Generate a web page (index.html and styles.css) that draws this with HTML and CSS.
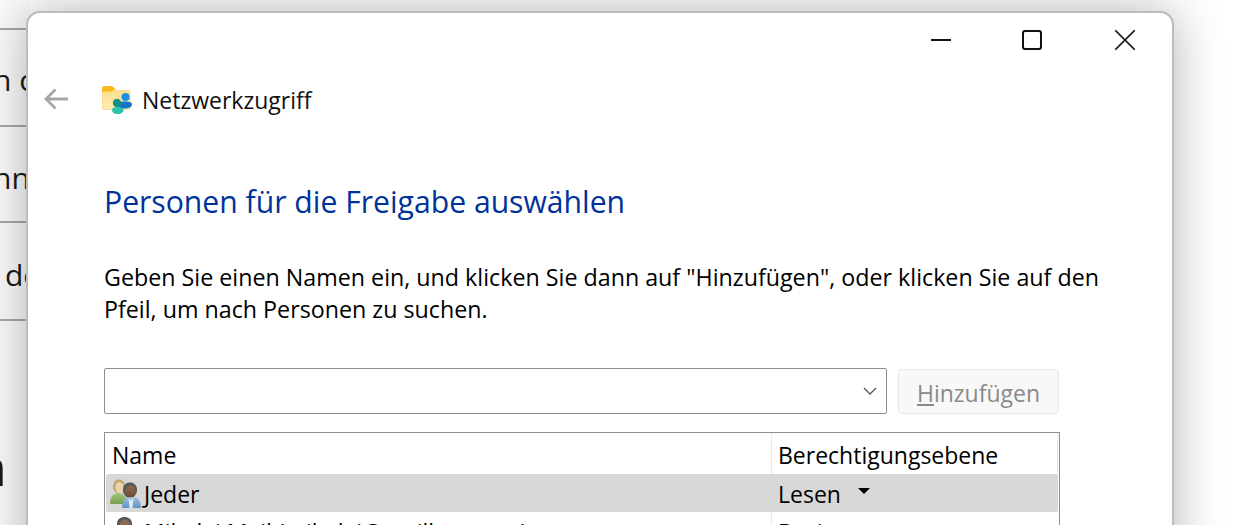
FILE: index.html
```html
<!DOCTYPE html>
<html lang="de">
<head>
<meta charset="utf-8">
<title>Netzwerkzugriff</title>
<link rel="stylesheet" href="styles.css">
</head>
<body>
<div class="desktop">
  <div class="behind">
    <div class="behind-row r1"></div>
    <div class="behind-row r2"><span>n c</span></div>
    <div class="behind-row r3"><span>nnu</span></div>
    <div class="behind-row r4"><span>de</span></div>
    <div class="behind-row r5"><span>n</span></div>
  </div>
  <section class="window">
    <div class="controls">
      <svg class="ctl" width="20" height="20" viewBox="0 0 20 20"><path d="M0 10H20" stroke="#111" stroke-width="2" fill="none"/></svg>
      <svg class="ctl" width="20" height="20" viewBox="0 0 20 20"><rect x="1" y="1" width="18" height="18" rx="2" stroke="#111" stroke-width="2" fill="none"/></svg>
      <svg class="ctl ctl-close" width="20" height="20" viewBox="0 0 20 20"><path d="M0 0L20 20M20 0L0 20" stroke="#222" stroke-width="1.7" fill="none"/></svg>
    </div>
    <div class="nav">
      <svg class="back" width="24" height="22" viewBox="0 0 24 22"><path d="M24 11H2M11.500 1.500L2 11L11.500 20.500" stroke="#a6a6a6" stroke-width="2.800" fill="none"/></svg>
      <svg class="folder" width="30" height="28" viewBox="0 0 30 28">
        <defs>
          <linearGradient id="fb" x1="0" y1="0" x2="0" y2="1"><stop offset="0" stop-color="#fbdc85"/><stop offset="1" stop-color="#fdeeb5"/></linearGradient>
        </defs>
        <path d="M0 4a2 2 0 0 1 2-2h9l3 2.500h12.500a1.500 1.500 0 0 1 1.500 1.500v16a1.500 1.500 0 0 1-1.500 1.500H1.500a1.500 1.500 0 0 1-1.500-1.500z" fill="url(#fb)" stroke="#e9c466" stroke-width=".5"/>
        <path d="M0 6V2.500A2.500 2.500 0 0 1 2.500 0H10l3.500 3L10 5.500H2z" fill="#fbb91d"/>
        <circle cx="23.500" cy="11" r="4" fill="#1c8fe3"/>
        <path d="M14.500 19c0-2.500 3.500-3.500 8.500-3.500s7 1 7 3c0 2.500-3 4-7.500 4-4 0-8-1-8-3.500z" fill="#1574c9"/>
        <circle cx="15" cy="17" r="4.200" fill="#129083"/>
        <path d="M10 24c0-2 2-3 5.500-3s6 1 6 3c0 2.500-2.500 4-6 4s-5.500-1.500-5.500-4z" fill="#2cc2ab"/>
      </svg>
      <span class="nav-title">Netzwerkzugriff</span>
    </div>
    <div class="content">
      <h1 class="heading">Personen für die Freigabe auswählen</h1>
      <p class="intro">Geben Sie einen Namen ein, und klicken Sie dann auf "Hinzufügen", oder klicken Sie auf den Pfeil, um nach Personen zu suchen.</p>
      <div class="picker">
        <div class="combo">
          <svg width="14" height="8" viewBox="0 0 14 8"><path d="M1 1L7 7L13 1" stroke="#555" stroke-width="1.300" fill="none"/></svg>
        </div>
        <div class="add-btn"><u>H</u>inzufügen</div>
      </div>
      <div class="table">
        <div class="row head">
          <div class="col-name">Name</div>
          <div class="col-level">Berechtigungsebene</div>
        </div>
        <div class="row selected">
          <div class="col-name">
            <svg class="user-icon" width="34" height="30" viewBox="0 0 34 30">
              <defs>
                <linearGradient id="sk" x1="0" y1="0" x2="0" y2="1"><stop offset="0" stop-color="#8f6a4c"/><stop offset="1" stop-color="#6a4630"/></linearGradient>
                <linearGradient id="sh" x1="0" y1="0" x2="0" y2="1"><stop offset="0" stop-color="#9cc0e2"/><stop offset="1" stop-color="#5b8fc0"/></linearGradient>
                <linearGradient id="gr" x1="0" y1="0" x2="0" y2="1"><stop offset="0" stop-color="#a8c47e"/><stop offset="1" stop-color="#76a050"/></linearGradient>
              </defs>
              <path d="M4 9c0-5 2.500-7.500 6-7.500S16 4 16 9c0 3-2 6-6 6s-6-3-6-6z" fill="#bda96c"/>
              <ellipse cx="10.500" cy="9.500" rx="4" ry="5.500" fill="#ecd3ae"/>
              <path d="M1 26c0-7 3-11 8-11s9 3 9 11z" fill="url(#gr)"/>
              <path d="M14 12c0-5 3-7.500 7-7.500s7 2.500 7 7.500c0 4-3 8-7 8s-7-4-7-8z" fill="#55585c"/>
              <ellipse cx="21.500" cy="14" rx="5" ry="6.500" fill="url(#sk)"/>
              <path d="M13 30c0-7 2-10.500 9-11s10 4 10 11c-3 1.500-16 1.500-19 0z" fill="url(#sh)"/>
              <path d="M19.500 19.500l2.500 3 2.500-3.500-1 11h-3z" fill="#e2ebf3"/>
            </svg>
            <span>Jeder</span>
          </div>
          <div class="col-level"><span>Lesen</span><i class="caret"></i></div>
        </div>
        <div class="row">
          <div class="col-name">
            <svg class="user-icon person" width="34" height="30" viewBox="0 0 34 30">
              <path d="M8 7c0-5 3.500-7 7.500-7s7.500 2 7.500 7c0 4-3.500 8-7.500 8S8 11 8 7z" fill="#55585c"/>
              <ellipse cx="16" cy="9" rx="5.500" ry="6.500" fill="#8f6a4c"/>
              <path d="M6 30c0-9 3-14 10-14s11 5 11 14z" fill="#6fa0cf"/>
            </svg>
            <span>Mikolaj Mail (mikolaj@mailbox.com)</span>
          </div>
          <div class="col-level"><span>Besitzer</span></div>
        </div>
      </div>
    </div>
  </section>
</div>
</body>
</html>
```
FILE: styles.css
```css
* { box-sizing: border-box; }
html, body { margin: 0; height: 100%; overflow: hidden; }
body { font-family: "Open Sans", "Noto Sans", sans-serif; color: #000; background: #fff; }
.desktop {
  position: relative;
  width: 1234px;
  height: 525px;
  overflow: hidden;
  background: #fff;
}
.behind {
  position: absolute;
  left: 0;
  top: 0;
  width: 30px;
  height: 525px;
  background: #fbfbfb;
  display: flex;
  flex-direction: column;
}
.behind-row {
  border-bottom: 2px solid #a8a8a8;
  font-size: 30px;
  white-space: nowrap;
  overflow: hidden;
  display: flex;
  align-items: center;
  color: #1a1a1a;
}
.behind-row span { margin-left: -7px; }
.r1 { height: 30px; }
.r2 { height: 97px; padding-top: 4px; }
.r3 { height: 96px; padding-top: 6px; }
.r4 { height: 98px; padding-top: 6px; }
.r4 span { margin-left: 5px; }
.r5 { height: 204px; border-bottom: 0; padding-top: 84px; font-size: 52px; }
.r5 span { margin-left: -25px; }
.window {
  position: absolute;
  left: 26px;
  top: 11px;
  width: 1148px;
  height: 560px;
  background: #fff;
  border: 2px solid #bcbcbc;
  border-radius: 14px;
  box-shadow: 0 0 50px rgba(0,0,0,.3);
}
.controls {
  display: flex;
  justify-content: flex-end;
  gap: 71px;
  padding: 17px 37px 0 0;
  height: 64px;
}
.ctl { display: block; }
.ctl-close { margin-left: 2px; }
.nav {
  display: flex;
  align-items: center;
  height: 44px;
  padding: 2px 0 0 16px;
}
.back { margin: -2px 34px 0 0; }
.folder { margin-right: 10px; }
.nav-title { font-size: 23px; color: #111; }
.content { padding: 0 0 0 76px; }
.heading {
  margin: 59px 0 0;
  font-size: 30.150px;
  font-weight: 400;
  line-height: 44px;
  color: #003399;
}
.intro {
  margin: 37px 0 0;
  width: 1020px;
  font-size: 23.250px;
  line-height: 32px;
}
.picker {
  display: flex;
  align-items: center;
  margin-top: 43px;
  gap: 11px;
}
.combo {
  width: 783px;
  height: 46px;
  border: 1.500px solid #8e8e8e;
  border-radius: 2px;
  display: flex;
  align-items: center;
  justify-content: flex-end;
  padding-right: 9px;
}
.add-btn {
  width: 161px;
  height: 45px;
  border: 1px solid #e8e8e8;
  border-radius: 4px;
  background: #f8f8f8;
  color: #8a8a8a;
  font-size: 23px;
  text-align: center;
  line-height: 46px;
}
.table {
  width: 956px;
  margin-top: 18px;
  border: 1.500px solid #8e8e93;
  padding: 0 1px 0 1px;
}
.row {
  display: flex;
  font-size: 23px;
  height: 38px;
  align-items: center;
}
.head { height: 41px; }
.selected { background: #d8d8d8; border-radius: 2px; }
.col-name {
  width: 666px;
  display: flex;
  align-items: center;
  height: 100%;
  padding: 2px 0 0 6px;
  border-right: 1px solid #e2ecf4;
}
.selected .col-name { padding-left: 3px; border-right-color: #d8d8d8; }
.row:not(.head):not(.selected) .col-name { padding-left: 3px; }
.col-level { padding: 2px 0 0 6px; display: flex; align-items: center; height: 100%; }
.head .col-level { flex: 1; border-right: 1px solid #e2ecf4; }
.user-icon { margin-right: 1px; flex: none; }
.selected .user-icon { margin-top: -2px; }
.caret {
  width: 0; height: 0;
  margin-left: 17px;
  margin-bottom: 6px;
  border-left: 6px solid transparent;
  border-right: 6px solid transparent;
  border-top: 6px solid #000;
}
```
